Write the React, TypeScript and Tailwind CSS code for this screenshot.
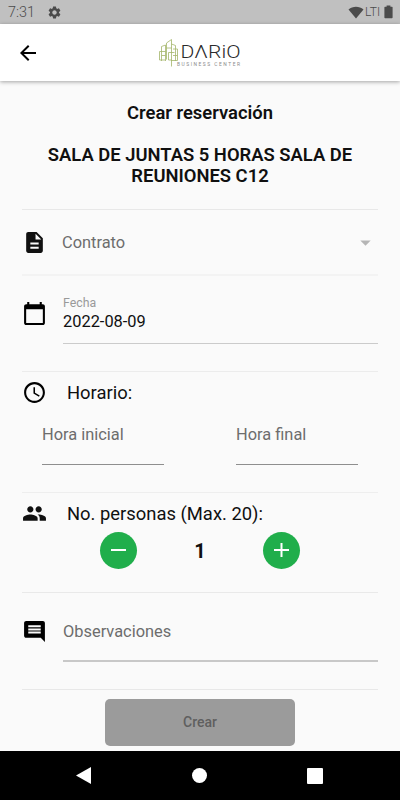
import { useState } from "react";
import type { ReactNode } from "react";
import {
  MdAccessTime,
  MdArrowBack,
  MdArrowDropDown,
  MdCalendarToday,
  MdComment,
  MdDescription,
  MdPeople,
  MdSettings,
} from "react-icons/md";

const MAX_PEOPLE = 20;

function StatusBar() {
  return (
    <div className="flex h-6 items-center justify-between bg-[#c0c0c0] pl-2 pr-[7px] text-[#4b4b4b]">
      <div className="flex items-center">
        <span className="w-[39px] pt-0.5 text-[14.4px] font-light leading-none">7:31</span>
        <MdSettings size={15} />
      </div>
      <div className="flex items-center">
        <svg width="16" height="13" viewBox="0 0 16 13" fill="#4b4b4b">
          <path d="M0.5 3.6C4.7 -0.2 11.3 -0.2 15.5 3.6L8 12.6z" />
        </svg>
        <span className="w-5 pl-px text-[12px] font-light leading-none">LTI</span>
        <svg width="9" height="14" viewBox="0 0 9 14" fill="#4b4b4b">
          <path d="M2.6 0.5h3.8v1.2h1.6q.6 0 .6.6v10.2q0 .8-.8.8H1.2q-.8 0-.8-.8V2.3q0-.6.6-.6h1.6z" />
        </svg>
      </div>
    </div>
  );
}

function Logo() {
  return (
    <svg width="84" height="32" viewBox="0 0 84 32">
      <g fill="none" stroke="#a3b56a" strokeWidth="0.8">
        <path d="M3.5 24V9.5l4-1.5v16M1.5 14.5h6M1.5 14.5v8.5h6M3.5 18.5h4" />
        <path d="M8.5 22.5V6l5-3.5v27M8.5 11h5M10.5 15.5h6M10.5 15.5v7.5h3" />
        <path d="M13.5 7l4 1.5v15.5M15 12h4.5v11.5H13M15 18.5h4.5" />
      </g>
      <text
        x="22.5"
        y="20.7"
        fontSize="17.5"
        fontWeight="300"
        fontFamily="Roboto, sans-serif"
        fill="#2a2a2a"
        textLength="60"
        lengthAdjust="spacingAndGlyphs"
      >
        DΛRiO
      </text>
      <text
        x="19"
        y="28.5"
        fontSize="4.9"
        fontFamily="Roboto, sans-serif"
        fill="#8a8a8a"
        textLength="63"
      >
        BUSINESS CENTER
      </text>
    </svg>
  );
}

function RoundButton({ label, onClick, children }: { label: string; onClick: () => void; children: ReactNode }) {
  return (
    <button
      aria-label={label}
      onClick={onClick}
      className="flex h-[37px] w-[37px] cursor-pointer items-center justify-center rounded-full bg-[#20ae4b]"
    >
      <svg width="15" height="15" viewBox="0 0 15 15" stroke="#fff" strokeWidth="2">
        {children}
      </svg>
    </button>
  );
}

export default function App() {
  const [people, setPeople] = useState<number>(1);

  return (
    <div className="flex h-[800px] w-[400px] flex-col overflow-hidden bg-[#fafafa] font-[Roboto,sans-serif] text-[#101010]">
      <StatusBar />

      {/* App bar */}
      <header className="z-10 grid h-[57px] grid-cols-3 items-center bg-white shadow-[0_1px_4px_rgba(0,0,0,0.35)]">
        <MdArrowBack size={24} className="ml-4 text-black" />
        <div className="flex justify-center">
          <Logo />
        </div>
      </header>

      <main className="flex flex-1 flex-col px-[22px]">
        <div className="h-32 text-center text-[18.4px] font-semibold leading-[21px]">
          <h1 className="pt-[21px]">Crear reservación</h1>
          <h2 className="pt-[21px]">SALA DE JUNTAS 5 HORAS SALA DE REUNIONES C12</h2>
        </div>

        {/* Contract */}
        <div className="flex h-[65px] items-center border-t border-[#e8e8e8]">
          <MdDescription size={25} />
          <span className="ml-[15px] flex-1 pt-[3px] text-[16.4px] text-[#6d6d6d]">Contrato</span>
          <MdArrowDropDown size={25} className="text-[#b5b5b5]" />
        </div>

        {/* Date */}
        <div className="flex h-[97px] border-t-2 border-[#f3f3f3]">
          <MdCalendarToday size={25} className="mt-[25px] text-black" />
          <div className="ml-4 mt-5 flex h-[48px] flex-1 flex-col border-b border-[#cbcbcb]">
            <span className="text-[12.3px] leading-[14px] text-[#999999]">Fecha</span>
            <span className="mt-0.5 text-[16.4px] leading-[19px]">2022-08-09</span>
          </div>
        </div>

        {/* Schedule */}
        <div className="h-[121px] border-t border-[#ececec]">
          <div className="flex h-[40px] items-center">
            <MdAccessTime size={25} className="text-black" />
            <span className="ml-5 pt-0.5 text-[18.4px]">Horario:</span>
          </div>
          <div className="flex justify-between px-5 text-[16.4px] leading-6 text-[#6d6d6d]">
            <div className="h-[53px] w-[122px] border-b border-[#8e8e8e] pt-[11px]">Hora inicial</div>
            <div className="h-[53px] w-[122px] border-b border-[#8e8e8e] pt-[11px]">Hora final</div>
          </div>
        </div>

        {/* People */}
        <div className="h-[100px] border-t border-[#eeeeee]">
          <div className="flex h-[39px] items-center pt-0.5">
            <MdPeople size={25} />
            <span className="ml-5 text-[18.4px]">No. personas (Max. {MAX_PEOPLE}):</span>
          </div>
          <div className="flex items-center justify-between px-[78px]">
            <RoundButton label="-" onClick={() => setPeople((p) => Math.max(1, p - 1))}>
              <path d="M0 7h15" />
            </RoundButton>
            <span className="text-[20px] font-bold">{people}</span>
            <RoundButton label="+" onClick={() => setPeople((p) => Math.min(MAX_PEOPLE, p + 1))}>
              <path d="M0 7h15M7.5 0v14" />
            </RoundButton>
          </div>
        </div>

        {/* Notes */}
        <div className="flex h-[97px] border-t border-[#e9e9e9]">
          <MdComment size={25} className="mt-[26px] text-black" />
          <div className="ml-4 h-[69px] flex-1 border-b-2 border-[#c8c8c8] pt-[27px] text-[16.4px] leading-6 text-[#6d6d6d]">
            Observaciones
          </div>
        </div>

        <div className="flex justify-center border-t border-[#e8e8e8] pt-[9px]">
          <button className="h-[47px] w-[190px] rounded-[5px] bg-[#9b9b9b] text-[14px] font-medium text-[#5f5f5f]">
            Crear
          </button>
        </div>
      </main>

      {/* System navigation */}
      <nav className="flex h-[49px] items-center justify-between bg-black pl-[76px] pr-[77px]">
        <svg width="15" height="17" viewBox="0 0 15 17" fill="#fff">
          <path d="M15 0v17L0 8.5z" />
        </svg>
        <span className="h-[15px] w-[15px] rounded-full bg-white" />
        <span className="h-4 w-4 rounded-[1px] bg-white" />
      </nav>
    </div>
  );
}
